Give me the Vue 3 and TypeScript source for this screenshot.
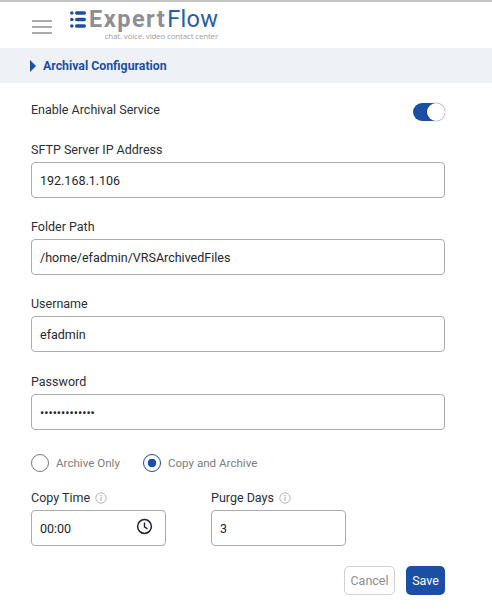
<script setup lang="ts">
const fields = [
  { label: 'SFTP Server IP Address', value: '192.168.1.106', type: 'text' },
  { label: 'Folder Path', value: '/home/efadmin/VRSArchivedFiles', type: 'text' },
  { label: 'Username', value: 'efadmin', type: 'text' },
  { label: 'Password', value: 'efadmin@12345', type: 'password' },
]
</script>

<template>
  <div class="page">
    <header class="topbar">
      <button class="menu" aria-label="Menu"><span></span><span></span><span></span></button>
      <div class="logo">
        <div class="logo-main">
          <svg class="logo-mark" width="16" height="17" viewBox="0 0 16 17">
            <g fill="#1b4fa3">
              <circle cx="1.8" cy="2" r="1.8" /><circle cx="1.8" cy="8.5" r="1.8" /><circle cx="1.8" cy="15" r="1.8" />
              <rect x="5" y="0.3" width="11" height="3.4" rx="1.7" />
              <rect x="5" y="6.8" width="11" height="3.4" rx="1.7" />
              <rect x="5" y="13.3" width="11" height="3.4" rx="1.7" />
            </g>
          </svg>
          <span class="expert">Expert</span><span class="flow">Flow</span>
        </div>
        <div class="tagline">chat. voice. video contact center</div>
      </div>
    </header>

    <div class="section">
      <svg width="6" height="12" viewBox="0 0 6 12"><path d="M0 0 L6 6 L0 12 Z" fill="#1b4fa3" /></svg>
      <span>Archival Configuration</span>
    </div>

    <form class="form" @submit.prevent>
      <div class="switch-row">
        <span class="label">Enable Archival Service</span>
        <span class="switch"><span class="knob"></span></span>
      </div>

      <div v-for="f in fields" :key="f.label" class="field">
        <label class="label">{{ f.label }}</label>
        <input class="input" :type="f.type" :value="f.value" />
      </div>

      <div class="radios">
        <label class="radio"><span class="dot"></span>Archive Only</label>
        <label class="radio on"><span class="dot"></span>Copy and Archive</label>
      </div>

      <div class="pair">
        <div class="short">
          <div class="label with-info">Copy Time
            <svg class="info" width="12" height="12" viewBox="0 0 12 12"><circle cx="6" cy="6" r="5.2" fill="none" stroke="#b8b8b8" /><path d="M6 5.2v3.6M6 3v1.2" stroke="#a0a0a0" stroke-width="1.1" /></svg>
          </div>
          <div class="time-box">
            <input class="input" value="00:00" />
            <svg width="17" height="17" viewBox="0 0 17 17"><circle cx="8.5" cy="8.5" r="6.9" fill="none" stroke="#1f2328" stroke-width="1.5" /><path d="M8.5 4.5v4.4l3 2" fill="none" stroke="#1f2328" stroke-width="1.4" /></svg>
          </div>
        </div>
        <div class="short">
          <div class="label with-info">Purge Days
            <svg class="info" width="12" height="12" viewBox="0 0 12 12"><circle cx="6" cy="6" r="5.2" fill="none" stroke="#b8b8b8" /><path d="M6 5.2v3.6M6 3v1.2" stroke="#a0a0a0" stroke-width="1.1" /></svg>
          </div>
          <input class="input" value="3" />
        </div>
      </div>

      <div class="actions">
        <button class="btn cancel" type="button">Cancel</button>
        <button class="btn save" type="submit">Save</button>
      </div>
    </form>
  </div>
</template>

<style>
html, body { margin: 0; background: #fff; }
</style>

<style scoped>
.page {
  width: 492px;
  height: 611px;
  overflow: hidden;
  box-sizing: border-box;
  border-top: 2px solid #c4c4c4;
  font-family: Roboto, "Liberation Sans", sans-serif;
  color: #2a2f36;
  font-size: 12.5px;
}
.topbar { height: 46px; display: flex; box-sizing: border-box; padding-left: 32px; }
.menu {
  width: 20px; padding: 0; margin-top: 18px; height: 14px;
  border: 0; background: none;
  display: flex; flex-direction: column; justify-content: space-between;
}
.menu span { display: block; height: 2px; background: #ababab; }
.logo { margin-left: 18px; padding-top: 7px; width: 148px; }
.logo-main { display: flex; align-items: center; height: 20px; font-size: 23.5px; line-height: 20px; white-space: nowrap; }
.logo-mark { margin-right: 3px; flex: none; }
.expert { color: #8c8f92; font-weight: 700; letter-spacing: 1.5px; }
.flow { color: #2a5ba8; letter-spacing: 0.3px; margin-left: 1px; }
.tagline { text-align: right; font-size: 8px; line-height: 11px; color: #a0a0a0; margin-top: 1px; font-family: "Open Sans", sans-serif; letter-spacing: -0.18px; white-space: nowrap; }
.section {
  height: 35px; background: #eef2f7;
  display: flex; align-items: center; gap: 7px;
  padding-left: 30px;
  color: #1b4fa3; font-weight: 700; font-size: 12.3px;
}
.form { padding: 0 47px 0 31px; }
.label { color: #2a2f36; font-size: 12.5px; line-height: 16px; }
.switch-row { display: flex; justify-content: space-between; align-items: center; height: 20px; margin-top: 17px; }
.switch { position: relative; width: 32px; height: 18px; background: #1b4fa3; border-radius: 9px; margin-top: 3px; }
.knob { position: absolute; right: 0; top: 0; width: 18px; height: 18px; border-radius: 50%; background: #fff; box-shadow: 0 0 2px rgba(0,0,0,.35); }
.field { display: flex; flex-direction: column; gap: 4px; margin-top: 22px; }
.field + .field { margin-top: 21px; }
.field:nth-child(5) { margin-top: 22px; }
.input {
  display: block; box-sizing: border-box; width: 100%; height: 36px;
  border: 1px solid #ababab; border-radius: 4px; padding: 0 8px;
  font: 12.5px Roboto, "Liberation Sans", sans-serif; color: #23272c; background: #fff; outline: none;
}
.radios { display: flex; gap: 23px; margin-top: 24px; height: 18px; }
.radio { display: flex; align-items: center; gap: 7px; color: #7d7d7d; font-size: 11.6px; }
.dot { box-sizing: border-box; width: 18px; height: 18px; border-radius: 50%; border: 1px solid #7a7a7a; background: #fff; }
.on .dot { border-color: #1b4fa3; background: radial-gradient(circle, #1b4fa3 0 4px, #fff 4.6px); }
.pair { display: flex; gap: 45px; margin-top: 18px; }
.short { width: 135px; }
.with-info { display: flex; align-items: center; gap: 5px; height: 16px; margin-bottom: 4px; }
.info { margin-top: -1px; }
.time-box { position: relative; }
.time-box svg { position: absolute; right: 13px; top: 8px; }
.actions { display: flex; justify-content: flex-end; gap: 11px; margin-top: 20px; }
.btn { height: 29px; border-radius: 5px; font: 12.5px Roboto, "Liberation Sans", sans-serif; padding: 0; }
.cancel { width: 51px; background: #fff; border: 1px solid #d0d0d0; color: #8d8d8d; }
.save { width: 39px; background: #1b4fa3; border: 0; color: #fff; }
</style>
